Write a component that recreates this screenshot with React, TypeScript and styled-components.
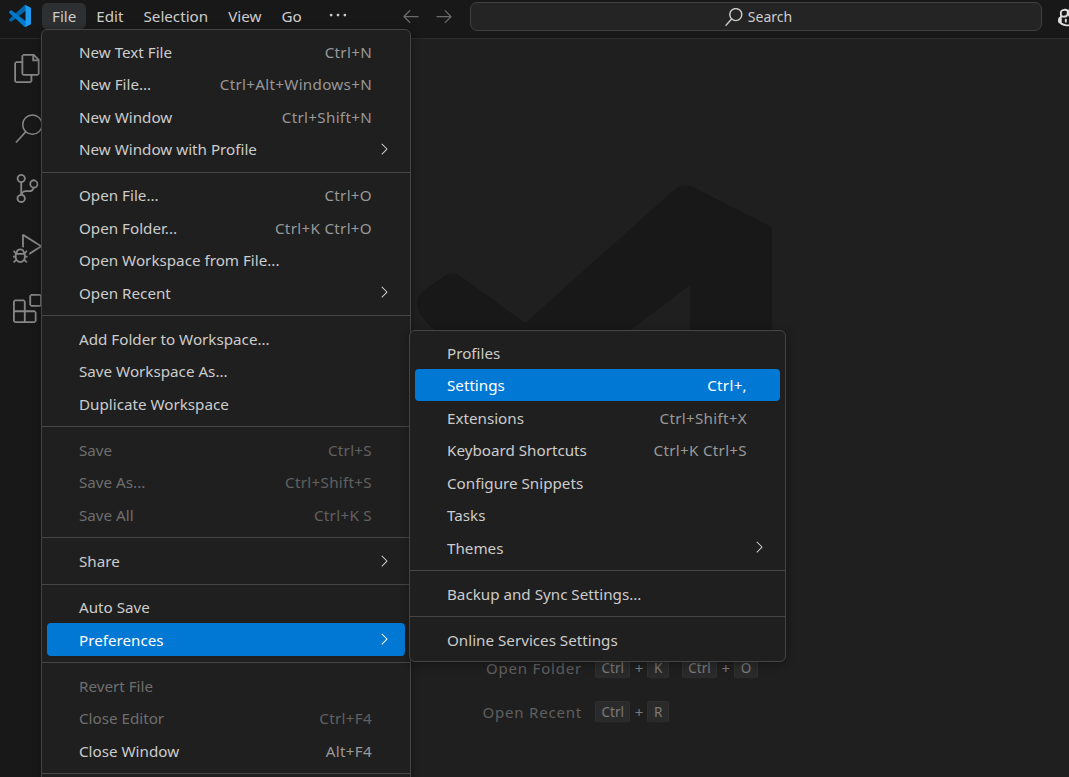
import React from "react";
import styled, { createGlobalStyle } from "styled-components";
import { VscChevronRight, VscArrowLeft, VscArrowRight, VscEllipsis, VscFiles, VscSourceControl, VscDebugAlt, VscExtensions, VscCopilot } from "react-icons/vsc";

const Global = createGlobalStyle`
  html, body { margin: 0; padding: 0; height: 100%; overflow: hidden; background: #1f1f1f; }
  #root { height: 100%; }
`;
const FONT = `"Noto Sans", "Open Sans", sans-serif`;

const Page = styled.div`
  position: relative; width: 1069px; height: 777px; overflow: hidden;
  display: flex; flex-direction: column; font-family: ${FONT}; color: #ccc;
`;
const TitleBar = styled.header`
  height: 38px; flex: none; display: flex; align-items: center; background: #181818;
  border-bottom: 1px solid #2b2b2b; box-sizing: content-box; overflow: hidden;
`;
const Logo = styled.svg`width: 22px; height: 22px; margin: -6px 11px 0 9px; flex: none;`;
const MenuBar = styled.nav`display: flex; align-items: center; width: 358px; flex: none; margin-top: -6px;`;
const MenuBarItem = styled.span<{ $active?: boolean }>`
  font-size: 15.2px; padding: 0 10px; height: 26px; line-height: 26px; border-radius: 5px;
  background: ${p => (p.$active ? "#2d2f30" : "transparent")};
`;
const Dots = styled(MenuBarItem)`
  margin-left: 5px; svg { font-size: 22px; vertical-align: -4px; margin-top: -3px; }
`;
const Nav = styled.div`display: flex; gap: 13px; width: 69px; flex: none; color: #6b6b6b; font-size: 20px; margin-top: -6px; margin-left: 1px;`;
const SearchBox = styled.div`
  width: 572px; height: 29px; box-sizing: border-box; flex: none; margin-top: -5px; padding-left: 5px;
  border: 1px solid #3f3f3f; border-radius: 7px; background: #242424;
  display: flex; align-items: center; justify-content: center; gap: 5px; font-size: 14px; color: #ccc;
`;
const SearchIcon = styled.svg<{ $size: number; $stroke: number }>`
  width: ${p => p.$size}px; height: ${p => p.$size}px; flex: none;
  fill: none; stroke: currentColor; stroke-width: ${p => p.$stroke};
`;
const Copilot = styled.div`margin-left: 16px; margin-top: -5px; font-size: 20px; display: flex; color: #ddd;`;
const Body = styled.div`flex: 1; display: flex; min-height: 0;`;
const ActivityBar = styled.aside`
  width: 55px; flex: none; background: #181818; display: flex; flex-direction: column;
  align-items: center; gap: 31px; padding-top: 15px; color: #868686; font-size: 29px;
  svg { display: block; flex: none; }
`;
const ActivitySearch = styled.span`display: block; height: 29px; margin-left: 3px;`;
const Editor = styled.main`
  flex: 1; background: #1f1f1f; padding: 146px 0 0 362px; display: flex; flex-direction: column;
`;
const Watermark = styled.svg`width: 355px; height: 355px; flex: none;`;
const Hints = styled.div`
  display: grid; grid-template-columns: 165px auto; column-gap: 13px; row-gap: 22px;
  margin-top: 117px; justify-content: start; align-items: center;
`;
const HintLabel = styled.span`text-align: right; font-size: 15px; letter-spacing: 0.8px; color: #5f5f5f;`;
const Keys = styled.div`display: flex; align-items: center; color: #7a7a7a;`;
const Kbd = styled.kbd`
  font-family: ${FONT}; font-size: 13.5px; height: 22px; box-sizing: border-box;
  display: inline-flex; align-items: center; justify-content: center;
  padding: 0 5.5px; min-width: 21px; background: #2a2a2a; color: #7a7a7a; border: 1px solid #2f2f2f;
  border-bottom-color: #222; border-radius: 3px;
`;
const Plus = styled.span`width: 17px; text-align: center; font-size: 15px;`;
const KeyGap = styled.span`width: 13px;`;

const Menu = styled.div<{ $left: number; $top: number; $width: number }>`
  position: absolute; left: ${p => p.$left}px; top: ${p => p.$top}px; width: ${p => p.$width}px;
  box-sizing: border-box; padding: 5.4px 0 5px; background: #1f1f1f; border: 1px solid #454545;
  border-radius: 6px; box-shadow: 0 2px 8px rgba(0,0,0,.36);
`;
const Row = styled.div<{ $state?: "on" | "off" }>`
  height: 32.5px; margin: 0 5px; padding-left: 32px; padding-right: 33px; box-sizing: border-box;
  display: flex; align-items: center; justify-content: space-between; position: relative;
  border-radius: 4px; font-size: 15.2px;
  color: ${p => (p.$state === "on" ? "#fff" : p.$state === "off" ? "#6e6e6e" : "#ccc")};
  background: ${p => (p.$state === "on" ? "#0078d4" : "transparent")};
`;
const Shortcut = styled.span<{ $state?: "on" | "off" }>`
  font-size: 15.2px; letter-spacing: 0.3px;
  color: ${p => (p.$state === "on" ? "#fff" : p.$state === "off" ? "#616161" : "#989898")};
`;
const Arrow = styled.span`
  position: absolute; right: 12px; top: 7px; font-size: 18px; display: flex;
`;
const Sep = styled.hr`border: 0; border-top: 1px solid #454545; margin: 6.3px 0;`;

type It = { t: string; k?: string; s?: "on" | "off"; a?: boolean } | "-";
const fileItems: It[] = [
  { t: "New Text File", k: "Ctrl+N" }, { t: "New File...", k: "Ctrl+Alt+Windows+N" }, { t: "New Window", k: "Ctrl+Shift+N" },
  { t: "New Window with Profile", a: true }, "-",
  { t: "Open File...", k: "Ctrl+O" }, { t: "Open Folder...", k: "Ctrl+K Ctrl+O" }, { t: "Open Workspace from File..." }, { t: "Open Recent", a: true }, "-",
  { t: "Add Folder to Workspace..." }, { t: "Save Workspace As..." }, { t: "Duplicate Workspace" }, "-",
  { t: "Save", k: "Ctrl+S", s: "off" }, { t: "Save As...", k: "Ctrl+Shift+S", s: "off" }, { t: "Save All", k: "Ctrl+K S", s: "off" }, "-",
  { t: "Share", a: true }, "-",
  { t: "Auto Save" }, { t: "Preferences", a: true, s: "on" }, "-",
  { t: "Revert File", s: "off" }, { t: "Close Editor", k: "Ctrl+F4", s: "off" }, { t: "Close Window", k: "Alt+F4" }, "-",
  { t: "" },
];
const prefItems: It[] = [
  { t: "Profiles" }, { t: "Settings", k: "Ctrl+,", s: "on" }, { t: "Extensions", k: "Ctrl+Shift+X" }, { t: "Keyboard Shortcuts", k: "Ctrl+K Ctrl+S" },
  { t: "Configure Snippets" }, { t: "Tasks" }, { t: "Themes", a: true }, "-", { t: "Backup and Sync Settings..." }, "-", { t: "Online Services Settings" },
];
const MenuRows = ({ items }: { items: It[] }) => (
  <>
    {items.map((it, i) =>
      it === "-" ? <Sep key={i} /> : (
        <Row key={i} $state={it.s}>
          <span>{it.t}</span>
          {it.k && <Shortcut $state={it.s}>{it.k}</Shortcut>}
          {it.a && <Arrow><VscChevronRight /></Arrow>}
        </Row>
      )
    )}
  </>
);

const SearchGlyph = ({ size, stroke }: { size: number; stroke: number }) => (
  <SearchIcon viewBox="0 0 30 30" $size={size} $stroke={stroke}>
    <circle cx="18" cy="11" r="10" />
    <path d="M11 18.5 1 29.5" />
  </SearchIcon>
);

export default function App() {
  return (
    <Page>
      <Global />
      <TitleBar>
        <Logo viewBox="0 0 100 100">
          <path fill="#0065a9" d="M96.5 10.8 75.9.9c-2.4-1.1-5.2-.6-7 1.2L1.4 63.7c-1.8 1.7-1.8 4.5 0 6.2l5.5 5c1.5 1.3 3.7 1.4 5.3.2L93.5 13.5c2.7-2 6.5-.1 6.5 3.2v-.2c0-2.4-1.4-4.6-3.5-5.7z" />
          <path fill="#007acc" d="m96.5 89.2-20.6 9.9c-2.4 1.1-5.2.6-7-1.2L1.4 36.3c-1.8-1.7-1.8-4.5 0-6.2l5.5-5c1.5-1.3 3.7-1.4 5.3-.2l81.3 61.6c2.7 2 6.5.1 6.5-3.2v.2c0 2.4-1.4 4.6-3.5 5.7z" />
          <path fill="#1f9cf0" d="M75.9 99.1c-2.4 1.1-5.2.6-7-1.2 2.3 2.3 6.2.7 6.2-2.6V4.7c0-3.3-3.9-4.9-6.2-2.6 1.8-1.8 4.6-2.3 7-1.2l20.6 9.9c2.1 1 3.5 3.2 3.5 5.6v67.2c0 2.4-1.4 4.6-3.5 5.6z" />
        </Logo>
        <MenuBar>
          <MenuBarItem $active>File</MenuBarItem>
          <MenuBarItem>Edit</MenuBarItem>
          <MenuBarItem>Selection</MenuBarItem>
          <MenuBarItem>View</MenuBarItem>
          <MenuBarItem>Go</MenuBarItem>
          <Dots><VscEllipsis /></Dots>
        </MenuBar>
        <Nav><VscArrowLeft /><VscArrowRight /></Nav>
        <SearchBox><SearchGlyph size={18} stroke={2.4} />Search</SearchBox>
        <Copilot><VscCopilot /></Copilot>
      </TitleBar>
      <Body>
        <ActivityBar>
          <VscFiles />
          <ActivitySearch><SearchGlyph size={29} stroke={1.6} /></ActivitySearch>
          <VscSourceControl />
          <VscDebugAlt />
          <VscExtensions />
        </ActivityBar>
        <Editor>
          <Watermark viewBox="0 0 355 355">
            <path fill="#181818" d="M6 106 26 92Q36 85 46 93L108 138 256 6Q266-3 278 3L355 42V355H273V100L108 225 12 140Q-8 120 6 106Z" />
          </Watermark>
          <Hints>
            <HintLabel>Open Folder</HintLabel>
            <Keys><Kbd>Ctrl</Kbd><Plus>+</Plus><Kbd>K</Kbd><KeyGap /><Kbd>Ctrl</Kbd><Plus>+</Plus><Kbd>O</Kbd></Keys>
            <HintLabel>Open Recent</HintLabel>
            <Keys><Kbd>Ctrl</Kbd><Plus>+</Plus><Kbd>R</Kbd></Keys>
          </Hints>
        </Editor>
      </Body>
      <Menu $left={41} $top={29} $width={370}><MenuRows items={fileItems} /></Menu>
      <Menu $left={409} $top={330} $width={377}><MenuRows items={prefItems} /></Menu>
    </Page>
  );
}
